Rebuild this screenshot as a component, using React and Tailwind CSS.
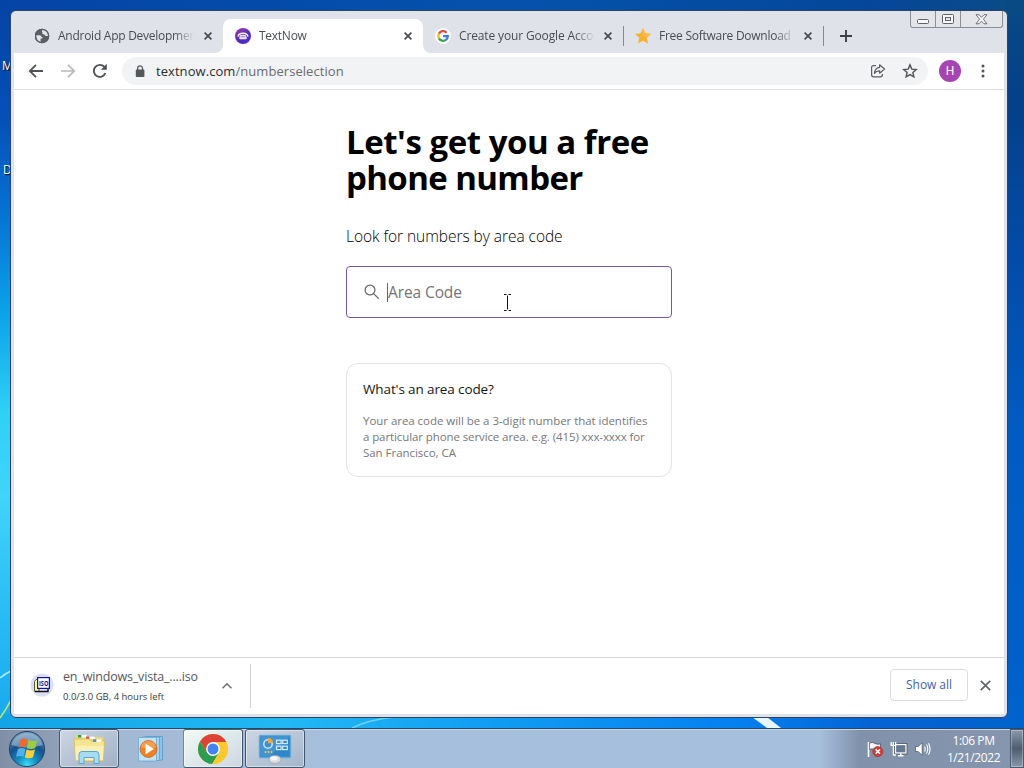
import React, { useState } from 'react';

const TABS = [
  { id: 'android', title: 'Android App Development',    icon: 'globe',   text: 'ml-[7px] w-[137px] tracking-[-0.26px]', divider: false },
  { id: 'textnow', title: 'TextNow',                    icon: 'textnow', text: 'ml-2 w-[136px] tracking-[-0.26px]',     divider: false },
  { id: 'google',  title: 'Create your Google Account', icon: 'google',  text: 'ml-2 w-[136px] tracking-[-0.14px]',     divider: true },
  { id: 'free',    title: 'Free Software Download For', icon: 'star',    text: 'ml-2 w-[136px] tracking-[-0.26px]',     divider: true },
];

// ── Small icons ──────────────────────────────────────────────────────────────
function TabIcon({ name }) {
  if (name === 'globe') {
    return (
      <svg width="16" height="16" viewBox="0 0 16 16" className="flex-none">
        <circle cx="7" cy="8" r="7.2" fill="#5b5e62" />
        <path d="M1.4 7.2 H4.8 C6 7.4 6 8.8 7.4 9 V10.6 H5.6 V14.2 C2.8 13.4 1 10.6 1.4 7.2Z" fill="#e4e6ea" />
        <path d="M8.4 1.6 C6.8 2.2 6.4 3.8 7.6 4.4 C6.6 5.2 7.6 6.6 9.2 6.2 C9.8 7.8 11.6 8.4 12.9 8 C13.2 4.8 11.2 2.2 8.4 1.6Z" fill="#e4e6ea" />
        <circle cx="7" cy="8" r="6.7" fill="none" stroke="#5b5e62" strokeWidth="1.2" />
      </svg>
    );
  }
  if (name === 'textnow') {
    return (
      <svg width="16" height="16" viewBox="0 0 16 16" className="flex-none">
        <defs>
          <linearGradient id="tn" x1="0" y1="0" x2="0.6" y2="1">
            <stop offset="0" stopColor="#a23cb0" />
            <stop offset="0.6" stopColor="#5a2bb4" />
            <stop offset="1" stopColor="#4a2ad0" />
          </linearGradient>
        </defs>
        <circle cx="8" cy="8" r="8" fill="url(#tn)" />
        <path d="M3.2 8.6 C2.6 4 13.4 4 12.8 8.6" fill="none" stroke="#fff" strokeWidth="1.5" />
        <path d="M5 7.2 Q8 6.4 11 7.2 L11.8 10 Q11.8 11.2 10.6 11.2 H5.4 Q4.2 11.2 4.2 10Z" fill="#f3ecfb" />
        <path d="M5.6 8.8 H10.4" stroke="#8c62cc" strokeWidth="0.9" />
      </svg>
    );
  }
  if (name === 'google') {
    return (
      <svg width="16" height="16" viewBox="0 0 16 16" className="flex-none">
        <circle cx="8" cy="8" r="8" fill="#fff" />
        <g fill="none" strokeWidth="2.3">
          <path d="M3.9 5.6 A4.8 4.8 0 0 1 11.6 4.7" stroke="#e2463c" />
          <path d="M3.9 10.4 A4.8 4.8 0 0 1 3.9 5.6" stroke="#f6b90c" />
          <path d="M11.2 11.6 A4.8 4.8 0 0 1 3.9 10.4" stroke="#36a552" />
          <path d="M8 8.2 H12.8 A4.8 4.8 0 0 1 11.1 11.7" stroke="#3d7ee8" />
        </g>
      </svg>
    );
  }
  return (
    <svg width="16" height="16" viewBox="0 0 16 16" className="flex-none">
      <path d="M8 0 L10.3 5.3 L16 5.9 L11.7 9.8 L13 15.6 L8 12.7 L3 15.6 L4.3 9.8 L0 5.9 L5.7 5.3Z" fill="#f9b02f" />
      <path d="M8 0 L10.3 5.3 L16 5.9 L11.7 9.8 L8 8Z" fill="#fbbd48" />
    </svg>
  );
}

function CloseIcon({ size = 8, color = '#45484c', weight = 1.7 }) {
  return (
    <svg width={size} height={size} viewBox="0 0 8 8" className="flex-none">
      <path d="M0.6 0.6 L7.4 7.4 M7.4 0.6 L0.6 7.4" stroke={color} strokeWidth={weight} />
    </svg>
  );
}

// ── Desktop wallpaper behind the window ──────────────────────────────────────
function Wallpaper() {
  return (
    <svg width="1024" height="768" viewBox="0 0 1024 768" className="absolute inset-0">
      <defs>
        <linearGradient id="wl" x1="0" y1="0" x2="0" y2="1">
          <stop offset="0" stopColor="#0444a6" />
          <stop offset="0.15" stopColor="#0450b8" />
          <stop offset="0.28" stopColor="#0572d4" />
          <stop offset="0.42" stopColor="#0ba2e8" />
          <stop offset="0.56" stopColor="#2fd0f6" />
          <stop offset="0.68" stopColor="#40d4fa" />
          <stop offset="0.84" stopColor="#28bcf4" />
          <stop offset="1" stopColor="#18a8ee" />
        </linearGradient>
        <linearGradient id="wr" x1="0" y1="0" x2="0" y2="1">
          <stop offset="0" stopColor="#094a84" />
          <stop offset="0.14" stopColor="#044088" />
          <stop offset="0.35" stopColor="#034ba8" />
          <stop offset="0.6" stopColor="#005cc2" />
          <stop offset="1" stopColor="#0062cc" />
        </linearGradient>
        <linearGradient id="wt" x1="0" y1="0" x2="1" y2="0">
          <stop offset="0" stopColor="#0444a6" />
          <stop offset="0.5" stopColor="#0552ac" />
          <stop offset="0.85" stopColor="#04479a" />
          <stop offset="1" stopColor="#0a4c84" />
        </linearGradient>
        <linearGradient id="wb" x1="0" y1="0" x2="1" y2="0">
          <stop offset="0" stopColor="#12a4e6" />
          <stop offset="0.28" stopColor="#22b8f4" />
          <stop offset="0.5" stopColor="#0f9af2" />
          <stop offset="0.72" stopColor="#0580f0" />
          <stop offset="0.85" stopColor="#0464d4" />
          <stop offset="1" stopColor="#0062cc" />
        </linearGradient>
      </defs>
      <rect width="1024" height="12" fill="url(#wt)" />
      <rect y="11" width="12" height="717" fill="url(#wl)" />
      <rect x="1006" y="0" width="18" height="728" fill="url(#wr)" />
      <rect x="0" y="714" width="1024" height="15" fill="url(#wb)" />
      <path d="M0 678 Q6 673 11 671" stroke="#b4eefc" strokeWidth="1.5" fill="none" />
      <path d="M0 718 Q7 708 11 700" stroke="#b6e86c" strokeWidth="1.6" fill="none" />
      <path d="M352 728 Q368 720 394 717" stroke="#6cd2f8" strokeWidth="1.4" fill="none" />
      <path d="M752 717 L767 717 L781 728 L767 728Z" fill="#e8f6ff" />
    </svg>
  );
}

// ── Chrome window pieces ─────────────────────────────────────────────────────
function Tab({ tab, active, onSelect }) {
  return (
    <div onClick={onSelect}
      className={`relative flex items-center w-[200px] h-[34px] pl-3 rounded-t-lg ${active ? 'bg-white' : ''}`}>
      {active && (
        <>
          <svg width="8" height="8" viewBox="0 0 8 8" className="absolute -left-2 bottom-0"><path d="M8 0 V8 H0 A8 8 0 0 0 8 0Z" fill="#fff" /></svg>
          <svg width="8" height="8" viewBox="0 0 8 8" className="absolute -right-2 bottom-0"><path d="M0 0 V8 H8 A8 8 0 0 1 0 0Z" fill="#fff" /></svg>
        </>
      )}
      <TabIcon name={tab.icon} />
      <span className={`${tab.text} text-[12px] leading-[18px] text-[#4a4d52] whitespace-nowrap overflow-hidden [mask-image:linear-gradient(to_right,#000_116px,transparent_136px)]`}>
        {tab.title}
      </span>
      <span className="ml-[9px] flex"><CloseIcon /></span>
      {tab.divider && <span className="absolute -right-px top-[7px] w-px h-5 bg-[#85888c]" />}
    </div>
  );
}

function WindowControls() {
  return (
    <div className="absolute right-[4px] top-0 flex h-[17px] w-[93px] border border-t-0 border-[#8b8e93] rounded-b-[3px] bg-[#e3e5e9]">
      <div className="w-[25px] flex items-end justify-center pb-[2px] border-r border-[#8b8e93]">
        <svg width="13" height="6" viewBox="0 0 13 6"><rect x="0.5" y="0.5" width="11" height="4" rx="1" fill="#f6f7f9" stroke="#606369" /></svg>
      </div>
      <div className="w-[25px] flex items-center justify-center border-r border-[#8b8e93]">
        <svg width="12" height="11" viewBox="0 0 12 11">
          <rect x="0.5" y="0.5" width="11" height="9" rx="1" fill="#f6f7f9" stroke="#606369" />
          <rect x="3.5" y="3.5" width="5" height="3" fill="#e3e5e9" stroke="#606369" />
        </svg>
      </div>
      <div className="flex-1 flex items-center justify-center">
        <svg width="13" height="11" viewBox="0 0 13 11">
          <path d="M1 0.7 H4 L6.5 3.3 L9 0.7 H12 L8.4 5.2 L12 9.8 H9 L6.5 7.2 L4 9.8 H1 L4.6 5.2Z" fill="#f6f7f9" stroke="#606369" strokeWidth="0.9" />
        </svg>
      </div>
    </div>
  );
}

function Toolbar() {
  return (
    <div className="flex-none flex items-center h-[37px] bg-white border-b border-[#dcdde0]">
      <svg width="16" height="16" viewBox="0 0 16 16" className="ml-[14px]" fill="none" stroke="#505357" strokeWidth="1.8">
        <path d="M15 8 H2 M8 1.8 L1.8 8 L8 14.2" />
      </svg>
      <svg width="16" height="16" viewBox="0 0 16 16" className="ml-4" fill="none" stroke="#b6b8bb" strokeWidth="1.7">
        <path d="M1 8 H14 M8 1.8 L14.2 8 L8 14.2" />
      </svg>
      <svg width="16" height="16" viewBox="0 0 16 16" className="ml-4" fill="none" stroke="#505357" strokeWidth="1.9">
        <path d="M13.4 10.2 A6 6 0 1 1 12.4 3.9" />
        <path d="M14.8 0.8 V6.8 H8.8Z" fill="#505357" stroke="none" />
      </svg>

      {/* address bar */}
      <div className="ml-[14px] flex items-center h-7 w-[806px] rounded-full bg-[#f2f3f5]">
        <svg width="10" height="13" viewBox="0 0 10 13" className="ml-[13px]">
          <rect x="0.8" y="4.6" width="8.6" height="7.4" rx="0.8" fill="#55585c" />
          <path d="M2.7 5 V3.3 A2.4 2.4 0 0 1 7.5 3.3 V5" fill="none" stroke="#55585c" strokeWidth="1.3" />
        </svg>
        <span className="ml-[11px] text-[13px] leading-5 tracking-[0.06px] text-[#6a6d71] whitespace-nowrap">
          <span className="text-[#2c2e31]">textnow.com</span>/numberselection
        </span>
        <svg width="16" height="16" viewBox="0 0 16 16" className="ml-auto" fill="none" stroke="#5a5d61" strokeWidth="1.2" strokeLinejoin="round">
          <path d="M6 2.6 H3.6 Q1.6 2.6 1.6 4.6 V11.8 Q1.6 13.8 3.6 13.8 H10.4 Q12.4 13.8 12.4 11.8 V11" />
          <path d="M9.6 1.8 L14.6 6 L9.6 10.2 V7.8 Q6.4 7.6 4.4 10.4 Q5 4.8 9.6 4.3Z" />
        </svg>
        <svg width="16" height="16" viewBox="0 0 16 16" className="ml-4 mr-[10px]" fill="none" stroke="#505357" strokeWidth="1.4">
          <path d="M8 1.9 L9.8 6.1 L14.3 6.5 L10.9 9.5 L11.9 13.9 L8 11.6 L4.1 13.9 L5.1 9.5 L1.7 6.5 L6.2 6.1Z" />
        </svg>
      </div>

      <div className="ml-[11px] w-[22px] h-[22px] rounded-full bg-[#a644b4] flex items-center justify-center text-white text-[12px] font-['Roboto',sans-serif]">H</div>
      <svg width="4" height="14" viewBox="0 0 4 14" className="ml-5" fill="#505357">
        <circle cx="2" cy="2" r="1.5" /><circle cx="2" cy="7" r="1.5" /><circle cx="2" cy="12" r="1.5" />
      </svg>
    </div>
  );
}

function NumberSelection() {
  return (
    <main className="flex-1 min-h-0 bg-white pl-[332px] pt-[34px]">
      <div className="w-[326px]">
        <h1 className="text-[33px] leading-[36px] font-bold text-black tracking-[-0.46px] whitespace-nowrap">
          Let's get you a free<br />
          <span className="tracking-[-0.6px]">phone number</span>
        </h1>
        <p className="mt-[28px] text-[15.5px] leading-6 font-[350] text-black tracking-[-0.05px]">Look for numbers by area code</p>

        {/* search field */}
        <div className="relative mt-[18px] flex items-center h-[52px] rounded border border-[#7357a8] pl-[17px]">
          <svg width="16" height="16" viewBox="0 0 16 16" fill="none" stroke="#6c6c6c" strokeWidth="1.3">
            <circle cx="6" cy="6" r="4.9" />
            <path d="M9.6 9.6 L14.8 14.8" />
          </svg>
          <span className="ml-[7px] w-px h-[19px] bg-[#6c55b0]" />
          <span className="text-[15.5px] leading-6 tracking-[-0.1px] text-[#757575]">Area Code</span>
          <svg width="9" height="17" viewBox="0 0 9 17" className="absolute left-[156px] top-[27px]" fill="none" stroke="#111" strokeWidth="1">
            <path d="M1 0.5 H3.5 M4.5 1.5 V15.5 M5.5 0.5 H8 M1 16.5 H3.5 M5.5 16.5 H8" />
          </svg>
        </div>

        {/* help card */}
        <div className="mt-[45px] h-[114px] rounded-[12px] border border-[#e4e4e6] px-4 pt-[15px]">
          <h2 className="text-[13.5px] leading-5 tracking-[-0.12px] text-[#161616]">What's an area code?</h2>
          <p className="mt-[14px] text-[11.5px] leading-4 tracking-[-0.04px] text-[#77787b] whitespace-nowrap">
            Your area code will be a 3-digit number that identifies<br />
            <span className="tracking-[-0.1px]">a particular phone service area. e.g. (415) xxx-xxxx for</span><br />
            San Francisco, CA
          </p>
        </div>
      </div>
    </main>
  );
}

function DownloadShelf() {
  return (
    <div className="flex-none flex items-center h-[57px] bg-white border-t border-[#d6d7da]">
      <svg width="24" height="24" viewBox="0 0 24 24" className="ml-4 -mt-[2px]">
        <circle cx="12" cy="12" r="11.5" fill="#dadff6" />
        <path d="M4.5 8.5 L6 6.5 H9 V18.5 H4.5Z" fill="#f6f6a0" stroke="#55553a" />
        <path d="M5 18.5 H18 V16" fill="none" stroke="#111" strokeWidth="1.4" />
        <rect x="7.6" y="4.6" width="11.8" height="10.8" fill="#fff" stroke="#14149a" strokeWidth="1.2" />
        <text x="9" y="12.6" fontSize="6.5" fontWeight="700" fill="#10108c" textLength="9.4" lengthAdjust="spacingAndGlyphs">ISO</text>
      </svg>
      <div className="ml-[9px] w-[136px] whitespace-nowrap">
        <p className="text-[12.5px] leading-[18px] tracking-[-0.17px] text-[#55585c]">en_windows_vista_....iso</p>
        <p className="mt-[4px] text-[9.5px] leading-[14px] text-[#3a3c40]">0.0/3.0 GB, 4 hours left</p>
      </div>
      <svg width="10" height="8" viewBox="0 0 10 8" className="ml-[23px]" fill="none" stroke="#6a6d71" strokeWidth="1.5">
        <path d="M0.5 6.3 L5 1.7 L9.5 6.3" />
      </svg>
      <span className="ml-[18px] w-px h-[44px] bg-[#cfd0d3]" />
      <button className="ml-auto -mt-[2px] w-[78px] h-8 rounded border border-[#dadce2] text-[12px] tracking-[-0.05px] text-[#3f62ac]">Show all</button>
      <span className="ml-3 mr-[13px] -mt-[2px] flex"><CloseIcon size={11} color="#66696d" weight={1.3} /></span>
    </div>
  );
}

// ── Taskbar ──────────────────────────────────────────────────────────────────
function StartOrb() {
  return (
    <svg width="38" height="38" viewBox="0 0 38 38">
      <defs>
        <radialGradient id="orb" cx="0.5" cy="0.95" r="0.9">
          <stop offset="0" stopColor="#3fe0f4" />
          <stop offset="0.3" stopColor="#1490c4" />
          <stop offset="0.65" stopColor="#14518c" />
          <stop offset="1" stopColor="#6f93b4" />
        </radialGradient>
      </defs>
      <circle cx="19" cy="19" r="17.6" fill="url(#orb)" stroke="#23486a" strokeWidth="1" />
      <path d="M3.5 15 A16 16 0 0 1 34.5 15 Q19 20 3.5 15Z" fill="#c6dbea" opacity="0.45" />
      <path d="M12.6 9.4 Q16 7.4 19.4 9.4 L17.8 17.4 Q14 15.8 10.4 17.6Z" fill="#ef6a2a" />
      <path d="M20.6 10 Q24.6 12 29.4 10.2 L27.2 18 Q23 19.8 18.8 18Z" fill="#9ccc42" />
      <path d="M10 19 Q13.6 17.2 17.4 19 L15.6 26.8 Q12 25 8 26.8Z" fill="#52b0ec" />
      <path d="M18.6 19.6 Q22.8 21.4 27 19.6 L25 27.2 Q20.8 29.2 16.8 27.2Z" fill="#fcd03c" />
    </svg>
  );
}

function FolderIcon() {
  return (
    <svg width="34" height="32" viewBox="0 0 34 32">
      <path d="M3 4 Q3 2 5 2 H12 L14 4 H31 V14 H3Z" fill="#ecd67a" />
      <rect x="6" y="2" width="3.5" height="2.5" fill="#2f9e4c" />
      <rect x="9.5" y="2" width="5" height="2.5" fill="#fff" />
      <rect x="14" y="3.6" width="3.5" height="2.5" fill="#d9573a" />
      <rect x="17.5" y="3.6" width="5" height="2.5" fill="#fff" />
      <path d="M2 6 H17 L19 8 H32.5 L31.4 28 H3.6Z" fill="#f7e596" stroke="#d9bb54" strokeWidth="0.8" />
      <rect x="21" y="6.4" width="3.5" height="2.5" fill="#4d93cf" />
      <rect x="24.5" y="6.4" width="5" height="2.5" fill="#fff" />
      <path d="M3 13 H31.6 L30.8 27 H4Z" fill="#faefb4" />
      <path d="M7 30.5 V21.5 Q7 18.5 10 18.5 H24 Q27 18.5 27 21.5 V30.5 H22 V24.5 H12 V30.5Z" fill="#a8dcf4" stroke="#56a8d4" strokeWidth="1" />
    </svg>
  );
}

function MediaIcon() {
  return (
    <svg width="28" height="28" viewBox="0 0 28 28">
      <path d="M8 1.5 H25.5 V25 L8 26Z" fill="#8fc3ea" stroke="#5799cc" strokeWidth="0.8" />
      <path d="M5 2 H22.5 V25.5 H5Z" fill="#a6d2f0" stroke="#5f9fce" strokeWidth="0.8" />
      <path d="M1.5 2.5 H19.5 V26 H1.5Z" fill="#c1e1f6" stroke="#6da8d2" strokeWidth="0.8" />
      <circle cx="11.5" cy="14" r="8.4" fill="#f08226" stroke="#c9641a" strokeWidth="0.8" />
      <path d="M3.6 12 A8.2 8.2 0 0 1 19.4 12 Q12 15 3.6 12Z" fill="#f8a860" opacity="0.7" />
      <path d="M8.6 8.8 L16.8 14 L8.6 19.2Z" fill="#fff" />
    </svg>
  );
}

function ChromeIcon() {
  return (
    <svg width="32" height="32" viewBox="0 0 32 32">
      <circle cx="16" cy="16" r="15" fill="#fbc92e" />
      <path d="M16 16 L16 9 H29.3 A15 15 0 0 0 3 8.5 L9.9 19.5Z" fill="#dc4437" />
      <path d="M3 8.5 A15 15 0 0 0 15.2 31 L22.1 19.5 L16 16 L9.9 19.5Z" fill="#2c9c50" />
      <path d="M22.1 19.5 L15.2 31 A15 15 0 0 0 29.3 9 H16 L16 16Z" fill="#fbc92e" />
      <circle cx="16" cy="16" r="6.9" fill="#fff" />
      <circle cx="16" cy="16" r="5.5" fill="#4384ee" />
    </svg>
  );
}

function ControlPanelIcon() {
  return (
    <svg width="34" height="30" viewBox="0 0 34 30">
      <rect x="1.5" y="1.5" width="31" height="22" rx="1" fill="#2f86c8" stroke="#5fa8da" strokeWidth="1.4" />
      <path d="M2.5 2.5 H31.5 L12 22.5 H2.5Z" fill="#4a9ad6" opacity="0.7" />
      <circle cx="10" cy="10" r="4.2" fill="#3c8fd0" stroke="#c5e4f8" strokeWidth="1.6" />
      <path d="M10 9.5 V4 A5.5 5.5 0 0 1 15.2 8.5Z" fill="#f4a63a" />
      <g fill="none" stroke="#d4ecfa" strokeWidth="1.2">
        <rect x="18.5" y="6.2" width="4.6" height="3.4" /><rect x="24.7" y="6.2" width="4.6" height="3.4" />
        <rect x="18.5" y="12.2" width="4.6" height="3.4" /><rect x="24.7" y="12.2" width="4.6" height="3.4" />
      </g>
      <path d="M7.5 17 V19 M10.5 17 V19 M13.5 17 V19" stroke="#f2c24a" strokeWidth="1.6" />
      <ellipse cx="17" cy="25.4" rx="6" ry="4" fill="#d9dde0" stroke="#9aa4ac" strokeWidth="0.8" />
      <ellipse cx="16" cy="24.2" rx="3.6" ry="2" fill="#f6f7f8" />
    </svg>
  );
}

const TASKS = [
  { id: 'explorer', Icon: FolderIcon,       box: 'ml-[5px] w-[60px] border-[#42566e] bg-linear-to-br from-[#ccd7e4] to-[#a0b0c6]' },
  { id: 'media',    Icon: MediaIcon,        box: 'ml-[2px] w-[60px] border-transparent' },
  { id: 'chrome',   Icon: ChromeIcon,       box: 'ml-[2px] w-[60px] border-[#42566e] border-l-[#3fae62] border-t-[#3a6a50] bg-linear-to-br from-[#f2fbf4] to-[#ccd6e2]' },
  { id: 'control',  Icon: ControlPanelIcon, box: 'ml-[2px] w-[60px] border-[#42566e] bg-linear-to-br from-[#ccd7e4] to-[#a4b5cb]' },
];

function Taskbar() {
  return (
    <div className="relative flex-none flex h-10 border-t border-[#27476b] shadow-[inset_0_1px_0_#c9d6e6] bg-[linear-gradient(to_right,#808fa5_0px,#8e9fb6_55px,#a3b8d3_120px,#a6bfdc_330px,#a6bfdc_820px,#8091aa_860px,#8796ae_1024px)]">
      <div className="ml-2 flex items-center"><StartOrb /></div>
      <div className="flex ml-[8px]">
        {TASKS.map(({ id, Icon, box }) => (
          <div key={id}
            className={`flex items-center justify-center h-[39px] rounded-[3px] border ${box} ${id === 'media' ? '' : 'shadow-[inset_0_0_0_1px_rgba(255,255,255,0.45)]'}`}>
            <Icon />
          </div>
        ))}
      </div>

      {/* tray */}
      <div className="ml-auto flex items-center">
        <svg width="18" height="18" viewBox="0 0 18 18">
          <path d="M2.5 2 V17" stroke="#fff" strokeWidth="1.6" />
          <path d="M3.4 3 Q6.5 1.8 9 3.4 Q12 5 14.5 3.8 V9.5 Q11.5 11 9 9.6 Q6 8.2 3.4 9.4Z" fill="#f6f8fa" stroke="#3f4c5e" strokeWidth="0.7" />
          <circle cx="11.8" cy="11.6" r="5" fill="#d23c32" stroke="#a82c26" strokeWidth="0.6" />
          <path d="M9.6 9.4 L14 13.8 M14 9.4 L9.6 13.8" stroke="#fff" strokeWidth="1.5" />
        </svg>
        <svg width="18" height="18" viewBox="0 0 18 18" className="ml-[6px]">
          <rect x="5.5" y="4.5" width="10.5" height="8.5" fill="#66788e" stroke="#333f4f" strokeWidth="2.6" />
          <rect x="5.5" y="4.5" width="10.5" height="8.5" fill="#66788e" stroke="#fff" strokeWidth="1.3" />
          <path d="M8 15.8 H13.5 M10.8 13 V15.8" stroke="#fff" strokeWidth="1.4" />
          <path d="M1.2 2 V5.4 H5.6 V2 M3.4 2 V15 H6" fill="none" stroke="#fff" strokeWidth="1.3" />
        </svg>
        <svg width="18" height="18" viewBox="0 0 18 18" className="ml-[6px]">
          <path d="M1.5 6.5 H4 L8.2 2.8 V15.2 L4 11.5 H1.5Z" fill="#fff" stroke="#45536a" strokeWidth="0.7" />
          <path d="M10.5 6.4 Q12 9 10.5 11.6 M12.5 4.6 Q15 9 12.5 13.4 M14.5 3.2 Q17.6 9 14.5 14.8" fill="none" stroke="#fff" strokeWidth="1.1" />
        </svg>
        <div className="ml-[13px] w-[57px] text-center text-[12px] leading-[17px] text-white whitespace-nowrap">
          <p className="tracking-[-0.4px]">1:06 PM</p>
          <p className="tracking-[-0.4px]">1/21/2022</p>
        </div>
        <span className="ml-[8px] h-full w-[14px] border border-[#4c5b70] bg-linear-to-b from-[#8c9aac] via-[#4f5d70] to-[#8997aa] shadow-[inset_0_0_0_1px_rgba(255,255,255,0.3)]" />
      </div>
    </div>
  );
}

export default function App() {
  const [activeTab, setActiveTab] = useState('textnow');

  return (
    <div className="relative flex flex-col w-[1024px] h-[768px] overflow-hidden bg-[#0450b4] font-['Open_Sans','Noto_Sans',sans-serif]">
      <Wallpaper />
      {/* desktop shortcut labels peeking out beside the window */}
      <span className="absolute left-[2px] top-[58px] text-[12px] leading-[15px] text-white [text-shadow:1px_1px_1px_#000]">M</span>
      <span className="absolute left-[3px] top-[162px] text-[12px] leading-[15px] text-white [text-shadow:1px_1px_1px_#000]">D</span>

      <div className="relative flex-1 min-h-0 pl-[10px] pr-[16px] pt-[10px] pb-[10px]">
        <div className="relative flex flex-col h-full border border-[#2c4364] rounded-md bg-[#dfe2e8] px-[3px] pb-[3px] overflow-hidden">
          <div className="flex-none flex items-end h-[42px] pl-[9px]">
            {TABS.map(tab => (
              <Tab key={tab.id} tab={tab} active={tab.id === activeTab} onSelect={() => setActiveTab(tab.id)} />
            ))}
            <svg width="12" height="12" viewBox="0 0 12 12" className="ml-[17px] mb-[11px]">
              <path d="M6 0 V12 M0 6 H12" stroke="#3c3f43" strokeWidth="1.9" />
            </svg>
          </div>
          <WindowControls />
          <Toolbar />
          <NumberSelection />
          <DownloadShelf />
        </div>
      </div>

      <Taskbar />
    </div>
  );
}
